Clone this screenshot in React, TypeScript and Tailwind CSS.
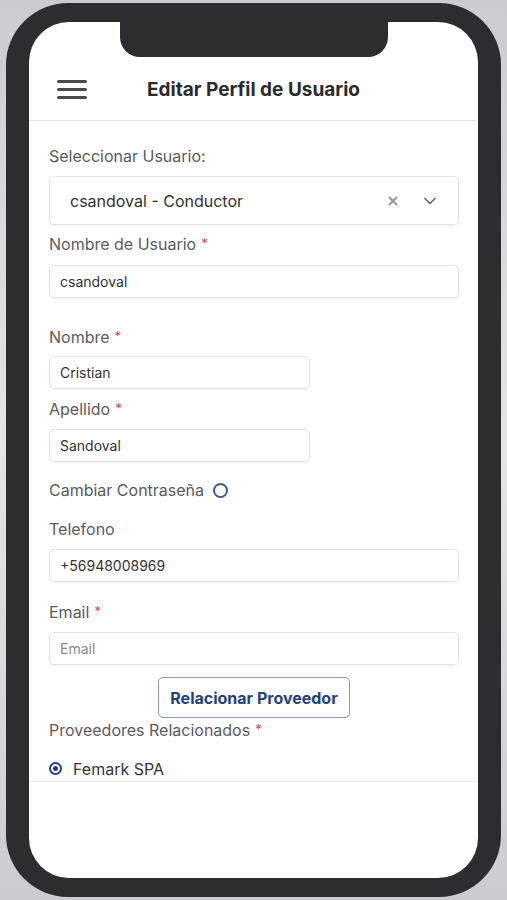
import {X, ChevronDown} from 'lucide-react';

function Label({text, required, className = ''}: {text: string; required?: boolean; className?: string}) {
    return (
        <div className={`h-5 flex items-center text-[16px] text-[#5b5b5b] ${className}`}>
            {text}
            {required && <span className="ml-[5px] text-[#d9453d] text-[13px]">*</span>}
        </div>
    );
}

function Field({value, placeholder, className = ''}: {value?: string; placeholder?: string; className?: string}) {
    return (
        <div
            className={`h-[33px] flex items-center px-[10px] rounded-[5px] border border-[#e4e4e4] shadow-[0_1px_2px_rgba(0,0,0,0.06)] text-[14px] ${value ? 'text-[#333]' : 'text-[#8a8a8a] text-[13px]'} ${className}`}>
            {value || placeholder}
        </div>
    );
}

export default function App() {
    return (
        <div className="w-[507px] h-[900px] bg-gradient-to-b from-[#c9ccd1] via-[#e4e6e9] to-[#c9ccd1] pl-[6px] pt-[3px]"
             style={{fontFamily: 'Inter, "Noto Sans", sans-serif'}}>
            <div className="w-[495px] h-[894px] rounded-[62px] bg-[#2c2d31] p-[19px_23px]">
                <div className="relative w-full h-full rounded-[40px] bg-white overflow-hidden flex flex-col">
                    {/* notch */}
                    <div className="absolute left-[91px] top-0 w-[268px] h-[35px] bg-[#2c2d31] rounded-b-[20px]"/>

                    {/* header */}
                    <div className="mt-[35px] h-[64px] shrink-0 grid grid-cols-[1fr_auto_1fr] items-center border-b border-[#e6e6e6]">
                        <div className="pl-[28px] pt-[2px] flex flex-col gap-[5px]">
                            <span className="block w-[30px] h-[3px] rounded-full bg-[#4a4a4a]"/>
                            <span className="block w-[30px] h-[3px] rounded-full bg-[#4a4a4a]"/>
                            <span className="block w-[30px] h-[3px] rounded-full bg-[#4a4a4a]"/>
                        </div>
                        <h1 className="pt-[3px] text-[19px] font-bold text-[#2b2b2b]">Editar Perfil de Usuario</h1>
                        <div/>
                    </div>

                    {/* form */}
                    <div className="pl-5 pr-[19px] pt-[25px] flex flex-col">
                        <Label text="Seleccionar Usuario:"/>
                        <div className="mt-[10px] h-[49px] flex items-center pl-[20px] pr-[18px] rounded-[5px] border border-[#e4e4e4] shadow-[0_1px_2px_rgba(0,0,0,0.06)]">
                            <span className="flex-1 text-[16px] text-[#333]">csandoval - Conductor</span>
                            <X size={14} strokeWidth={3.5} className="text-[#999] mr-[20px]"/>
                            <ChevronDown size={20} strokeWidth={2} className="text-[#666]"/>
                        </div>

                        <Label text="Nombre de Usuario" required className="mt-[9px]"/>
                        <Field value="csandoval" className="mt-[11px]"/>

                        <Label text="Nombre" required className="mt-[29px]"/>
                        <Field value="Cristian" className="mt-[9px] w-[261px]"/>

                        <Label text="Apellido" required className="mt-[10px]"/>
                        <Field value="Sandoval" className="mt-[10px] w-[261px]"/>

                        <div className="mt-[18px] h-5 flex items-center text-[16px] text-[#5b5b5b]">
                            Cambiar Contraseña
                            <span className="ml-[9px] w-[15px] h-[15px] rounded-full border-2 border-[#3d5a98]"/>
                        </div>

                        <Label text="Telefono" className="mt-[19px]"/>
                        <Field value="+56948008969" className="mt-[10px]"/>

                        <Label text="Email" required className="mt-[20px]"/>
                        <Field placeholder="Email" className="mt-[10px]"/>

                        <div className="mt-[12px] flex justify-center">
                            <button className="h-[41px] w-[192px] rounded-[5px] border border-[#8b9bb8] bg-white text-[16px] font-bold text-[#24417c]">
                                Relacionar Proveedor
                            </button>
                        </div>

                        <Label text="Proveedores Relacionados" required className="mt-[2px]"/>
                    </div>

                    <div className="mt-[19px] pl-5 pb-[3px] h-[23px] flex items-center border-b border-[#eeeeee]">
                        <span className="w-[13px] h-[13px] rounded-full border-2 border-[#24417c] flex items-center justify-center">
                            <span className="w-[5px] h-[5px] rounded-full bg-[#24417c]"/>
                        </span>
                        <span className="ml-[11px] text-[16px] text-[#333]">Femark SPA</span>
                    </div>
                </div>
            </div>
        </div>
    );
}
